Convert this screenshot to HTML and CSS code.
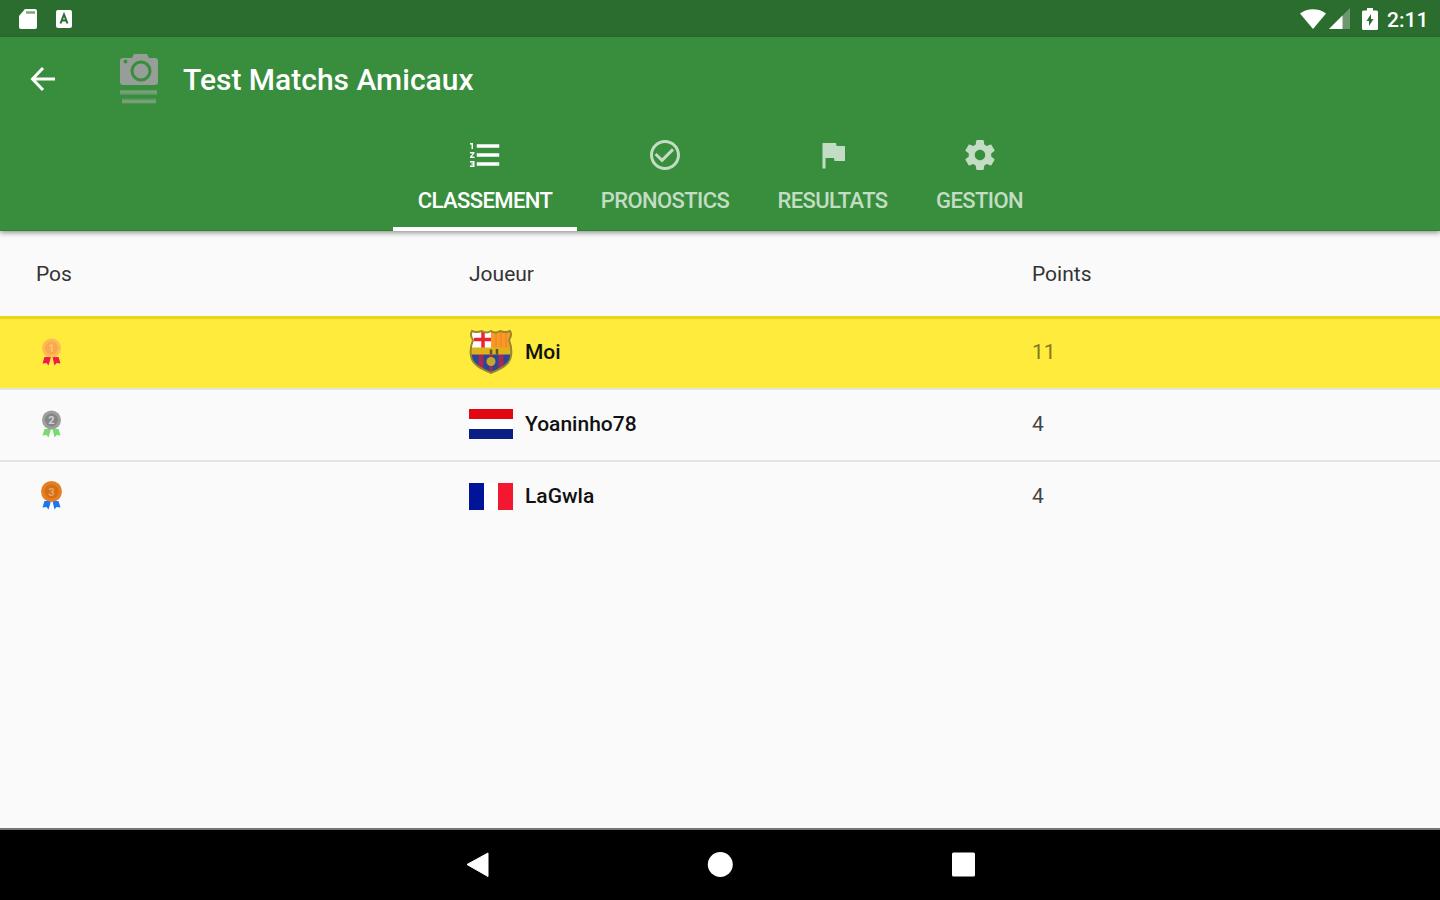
FILE: index.html
```html
<!DOCTYPE html>
<html lang="fr">
<head>
<meta charset="UTF-8" />
<meta name="viewport" content="width=device-width, initial-scale=1" />
<title>Test Matchs Amicaux</title>
<link rel="stylesheet" href="styles.css">
</head>
<body>
  <div class="status-bar">
    <div class="status-left">
      <svg width="20" height="22" viewBox="0 0 20 22"><path d="M7 1h10a2 2 0 0 1 2 2v16a2 2 0 0 1-2 2H3a2 2 0 0 1-2-2V8z" fill="#fff"/><path d="M8 4.5h9" stroke="#7fa681" stroke-width="2.5"/></svg>
      <svg width="18" height="20" viewBox="0 0 18 20"><rect x="1" y="1" width="16" height="18" rx="2" fill="#fff"/><path d="M5.5 14.5 9 5.500l3.500 9M7 11.500h4" fill="none" stroke="#2b6d2e" stroke-width="2"/></svg>
    </div>
    <div class="status-right">
      <svg width="28" height="22" viewBox="0 0 28 22"><path d="M14 21 1 5.500C8-.2 20-.2 27 5.500z" fill="#fff"/></svg>
      <svg class="signal" width="22" height="22" viewBox="0 0 22 22"><path d="M0 21 21 0v21z" fill="#6b996d"/><path d="M0 21 13.500 7.500V21z" fill="#fff"/></svg>
      <svg class="battery" width="16" height="22" viewBox="0 0 16 22"><path d="M5 0h6v2.500h3.500a1.500 1.500 0 0 1 1.500 1.500v16.500a1.500 1.500 0 0 1-1.500 1.500h-13A1.500 1.500 0 0 1 0 20.500V4a1.500 1.500 0 0 1 1.500-1.500H5z" fill="#fff"/><path d="M9 6v5h2.500L7 18v-5H4.500z" fill="#2b6d2e"/></svg>
      <span class="clock">2:11</span>
    </div>
  </div>

  <header class="app-bar">
    <div class="toolbar">
      <svg class="back" width="26" height="26" viewBox="0 0 26 26"><path d="M25 13H3M13 2 2.500 13 13 24" fill="none" stroke="#fff" stroke-width="3"/></svg>
      <svg class="group-image" width="40" height="54" viewBox="0 0 40 54">
        <path d="M4 6h9l2-4h13l2 4h6a3 3 0 0 1 3 3v21a3 3 0 0 1-3 3H4a3 3 0 0 1-3-3V9a3 3 0 0 1 3-3z" fill="#979e98"/>
        <circle cx="22" cy="19" r="9" fill="none" stroke="#388e3c" stroke-width="3"/>
        <circle cx="6.500" cy="9.500" r="2" fill="#388e3c"/>
        <!-- caption under the camera -->
        <path d="M1 40.500h37M3 49h34" stroke="#5a985d" stroke-width="5"/>
        <path d="M1 40h37M3 49.500h34" stroke="#77a079" stroke-width="3"/>
      </svg>
      <h1>Test Matchs Amicaux</h1>
    </div>
    <nav class="tabs">
      <a class="tab tab-classement active">
        <svg width="36" height="36" viewBox="0 0 24 24"><path d="M2 17h2v.5H3v1h1v.5H2v1h3v-4H2v1zm1-9h1V4H2v1h1v3zm-1 3h1.800L2 13.100v.9h3v-1H3.200L5 10.900V10H2v1zm4.500-6.200v2.400h15V4.800zm0 14.400h15v-2.400h-15zm0-6h15v-2.400h-15z"/></svg>
        <span>CLASSEMENT</span>
      </a>
      <a class="tab tab-pronostics">
        <svg width="36" height="36" viewBox="0 0 24 24"><path d="M16.590 7.580 10 14.170l-3.590-3.580L5 12l5 5 8-8zM12 2C6.480 2 2 6.480 2 12s4.480 10 10 10 10-4.480 10-10S17.520 2 12 2zm0 18c-4.420 0-8-3.580-8-8s3.580-8 8-8 8 3.580 8 8-3.580 8-8 8z"/></svg>
        <span>PRONOSTICS</span>
      </a>
      <a class="tab tab-resultats">
        <svg width="36" height="36" viewBox="0 0 24 24"><path d="M14.400 6 14 4H5v17h2v-7h5.600l.4 2h7V6z"/></svg>
        <span>RESULTATS</span>
      </a>
      <a class="tab tab-gestion">
        <svg width="36" height="36" viewBox="0 0 24 24"><path d="M19.430 12.980c.04-.32.07-.64.07-.98s-.03-.66-.07-.98l2.110-1.650c.19-.15.24-.42.12-.64l-2-3.460c-.12-.22-.39-.3-.61-.22l-2.490 1c-.52-.4-1.080-.73-1.690-.98l-.38-2.650C14.460 2.180 14.250 2 14 2h-4c-.25 0-.46.18-.49.42l-.38 2.650c-.61.25-1.170.59-1.690.98l-2.490-1c-.23-.09-.49 0-.61.22l-2 3.460c-.13.22-.07.49.12.64l2.110 1.650c-.04.32-.07.65-.07.98s.03.66.07.98l-2.110 1.650c-.19.15-.24.42-.12.64l2 3.460c.12.22.39.3.61.22l2.490-1c.52.4 1.080.73 1.690.98l.38 2.650c.03.24.24.42.49.42h4c.25 0 .46-.18.49-.42l.38-2.650c.61-.25 1.170-.59 1.690-.98l2.490 1c.23.09.49 0 .61-.22l2-3.460c.12-.22.07-.49-.12-.64l-2.110-1.650zM12 15.500c-1.930 0-3.500-1.570-3.500-3.500s1.570-3.500 3.500-3.500 3.500 1.570 3.500 3.500-1.570 3.500-3.500 3.500z"/></svg>
        <span>GESTION</span>
      </a>
    </nav>
  </header>

  <main class="ranking">
    <div class="row head">
      <span>Pos</span>
      <span>Joueur</span>
      <span>Points</span>
    </div>
    <div class="row me">
      <svg class="medal" width="30" height="30" viewBox="0 0 30 30">
        <path d="M8.500 20H15l-2.500 8.500-2-2.500-4 .5zM22.500 20H16.500l2 8.500 2-2.500 4 .5z" fill="#f5174f"/>
        <circle cx="15.500" cy="11" r="9.500" fill="#ffb957"/><circle cx="15.500" cy="11" r="6.500" fill="#f9a94b"/><text x="15.500" y="15" fill="#ffc774">1</text>
      </svg>
      <div class="player">
        <svg class="logo" width="44" height="46" viewBox="0 0 44 46">
          <defs><clipPath id="crest"><path d="M3 2c4 2 7 1 10 0 3 2 6 2 9 0 3 2 6 2 9 0 3 1 6 2 10 0 2 3 1 6-1 9 2 5 3 10 2 16-1 9-11 13-20 17C13 40 3 36 2 27c-1-6 0-11 2-16C2 8 1 5 3 2z"/></clipPath></defs>
          <g clip-path="url(#crest)">
            <path fill="#fff" d="M0 0h22v19H0z"/><path d="M14 2v17M5 10.500h17" stroke="#ec2433" stroke-width="3.500"/>
            <path fill="#f99b22" d="M22 0h22v19H22z"/><path d="M27 0v19m5-19v19m5-19v19" stroke="#f28b2c" stroke-width="2"/>
            <path fill="#29469b" d="M0 25h44v21H0z"/><path d="M12 25v20m20-20v20" stroke="#a52a55" stroke-width="5"/><path d="M22 25v20" stroke="#a52a55" stroke-width="3"/>
            <path fill="#dfb21c" d="M0 18.500h44v7H0z"/><path d="M22 25.500v-5m6 5v-5.500" stroke="#5b5323" stroke-width="2.500"/>
            <circle cx="22" cy="32.500" r="4.500" fill="#c7a62b"/>
          </g>
          <path d="M3 2c4 2 7 1 10 0 3 2 6 2 9 0 3 2 6 2 9 0 3 1 6 2 10 0 2 3 1 6-1 9 2 5 3 10 2 16-1 9-11 13-20 17C13 40 3 36 2 27c-1-6 0-11 2-16C2 8 1 5 3 2z" fill="none" stroke="#98862a" stroke-width="2"/>
        </svg>
        <span>Moi</span>
      </div>
      <span class="points">11</span>
    </div>
    <div class="row">
      <svg class="medal" width="30" height="30" viewBox="0 0 30 30">
        <path d="M8.500 20H15l-2.500 8.500-2-2.500-4 .5zM22.500 20H16.500l2 8.500 2-2.500 4 .5z" fill="#76dc6b"/>
        <circle cx="15.500" cy="11" r="9.500" fill="#9e9e9e"/><circle cx="15.500" cy="11" r="6.500" fill="#858585"/><text x="15.500" y="15" fill="#d0d0d0">2</text>
      </svg>
      <div class="player">
        <div class="flag flag-nl"></div>
        <span>Yoaninho78</span>
      </div>
      <span class="points">4</span>
    </div>
    <div class="row">
      <svg class="medal" width="30" height="30" viewBox="0 0 30 30">
        <path d="M8.500 20H15l-2.500 8.500-2-2.500-4 .5zM22.500 20H16.500l2 8.500 2-2.500 4 .5z" fill="#1976f5"/>
        <circle cx="15.500" cy="10.500" r="10.500" fill="#e67e22"/><circle cx="15.500" cy="10.500" r="7" fill="#d36f18"/><text x="15.500" y="14.500" fill="#f2a45c">3</text>
      </svg>
      <div class="player">
        <div class="flag flag-fr"></div>
        <span>LaGwla</span>
      </div>
      <span class="points">4</span>
    </div>
  </main>

  <footer class="nav-bar">
    <svg width="28" height="28" viewBox="0 0 28 28"><path d="M4 13.500 25 2v23.500z" fill="#fff" stroke="#fff"/></svg>
    <svg width="28" height="28" viewBox="0 0 28 28"><circle cx="14.300" cy="13.500" r="12.500" fill="#fff"/></svg>
    <svg width="28" height="28" viewBox="0 0 28 28"><rect x="3" y="1.500" width="23" height="24" rx="1.500" fill="#fff"/></svg>
  </footer>
</body>
</html>
```
FILE: styles.css
```css
* {
  box-sizing: border-box;
}
body {
  margin: 0;
  height: 900px;
  display: flex;
  flex-direction: column;
  overflow: hidden;
  font-family: Roboto, sans-serif;
  background: #fafafa;
}
h1 {
  margin: 0;
}
svg {
  display: block;
  flex-shrink: 0;
}

/* Status bar */
.status-bar {
  height: 37px;
  padding: 0 12px 0 18px;
  display: flex;
  justify-content: space-between;
  align-items: center;
  background: #2b6d2e;
  color: #fff;
}
.status-left {
  display: flex;
  align-items: center;
  gap: 17px;
}
.status-right {
  display: flex;
  align-items: center;
}
.signal {
  margin-left: 2px;
}
.battery {
  margin-left: 11px;
}
.clock {
  width: 41px;
  margin-left: 9px;
  padding-top: 2px;
  font-size: 21px;
  font-weight: 500;
  line-height: 24px;
}

/* App bar */
.app-bar {
  position: relative;
  height: 194px;
  background: #388e3c;
  border-bottom: 1px solid #2c8230;
  box-shadow: 0 2px 5px rgba(0,0,0,0.4);
}
.toolbar {
  height: 84px;
  padding-left: 30px;
  display: flex;
  align-items: center;
}
.group-image {
  margin-left: 63px;
}
h1 {
  margin-left: 24px;
  font-size: 30px;
  font-weight: 500;
  color: #fff;
}
.tabs {
  height: 110px;
  display: flex;
  justify-content: center;
}
.tab {
  display: flex;
  flex-direction: column;
  align-items: center;
  padding-top: 16px;
  border-bottom: 4px solid transparent;
  color: #c3ddc4;
  fill: #c3ddc4;
  font-size: 22px;
  font-weight: 500;
  letter-spacing: -0.6px;
  white-space: nowrap;
}
.tab span {
  margin-top: 15px;
  line-height: 26px;
}
.tab.active {
  color: #fff;
  fill: #fff;
  border-color: #fff;
}
.tab-classement {
  width: 184px;
}
.tab-pronostics {
  width: 176px;
}
.tab-resultats {
  width: 159px;
}
.tab-gestion {
  width: 135px;
}

/* Ranking */
.ranking {
  flex: 1;
}
.row {
  height: 72px;
  padding-left: 36px;
  padding-bottom: 2px;
  display: grid;
  grid-template-columns: 433px 563px 1fr;
  align-items: center;
  border-top: 2px solid #e4e4e4;
  font-size: 21px;
  color: #111;
}
.row.head {
  height: 85px;
  padding-bottom: 0;
  border-top: none;
  color: #333;
}
.row.me {
  background: #ffeb3b;
  padding-bottom: 3px;
  border-top: 3px solid #ecd51b;
}
.medal text {
  font-size: 11px;
  font-weight: 700;
  text-anchor: middle;
}
.player {
  display: flex;
  align-items: center;
  gap: 12px;
  font-weight: 500;
}
.flag {
  width: 44px;
}
.flag-nl {
  height: 30px;
  background: linear-gradient(#e30613 33%, #fff 33%, #fff 67%, #0a1f85 67%);
}
.flag-fr {
  height: 27px;
  background: linear-gradient(90deg, #00149a 33%, #fff 33%, #fff 67%, #f3182f 67%);
}
.points {
  color: #444;
}
.me .points {
  color: #85791f;
}

/* Navigation bar */
.nav-bar {
  height: 72px;
  display: flex;
  justify-content: center;
  align-items: center;
  gap: 215px;
  background: #000;
  border-top: 2px solid #777;
}
```
